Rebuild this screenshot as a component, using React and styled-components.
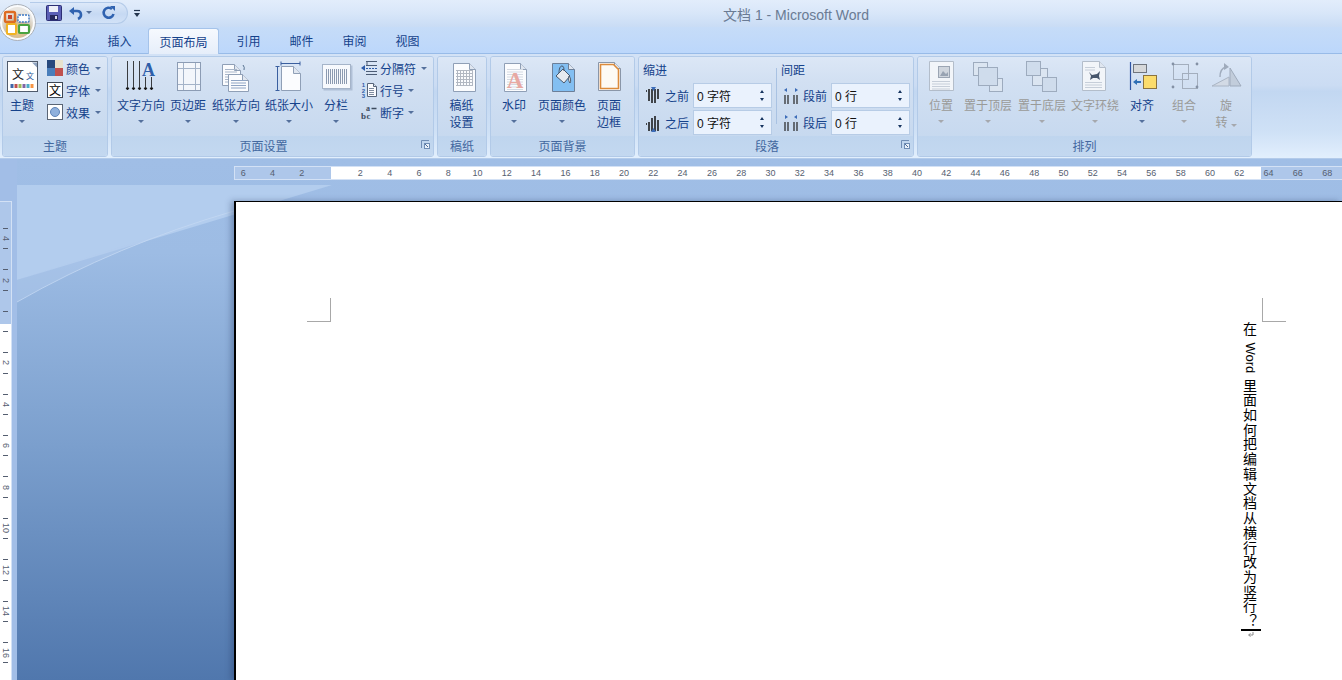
import React from 'react';
import styled, { createGlobalStyle } from 'styled-components';

const GlobalStyle = createGlobalStyle`
  html, body {
    margin: 0;
    padding: 0;
    height: 100%;
    overflow: hidden;
  }
  * {
    box-sizing: border-box;
  }
  body {
    font-family: "Liberation Sans", "Noto Sans CJK SC", sans-serif;
    font-size: 12px;
    color: #15428b;
  }
`;

const Window = styled.div`
  position: relative;
  width: 1342px;
  height: 680px;
  display: flex;
  flex-direction: column;
  overflow: hidden;
`;

const OfficeButton = styled.div`
  position: absolute;
  left: -1px;
  top: 4px;
  width: 37px;
  height: 37px;
  z-index: 3;
`;

const TitleBar = styled.div`
  height: 27px;
  display: flex;
  align-items: center;
  background: linear-gradient(#e2edfb, #d9e7f9 45%, #c9dcf5);
`;

const QuickBarArea = styled.div`
  width: 250px;
  display: flex;
  align-items: center;
  padding-left: 30px;
`;

const QuickBar = styled.div`
  width: 98px;
  height: 22px;
  margin-top: -2px;
  display: flex;
  align-items: center;
  padding-left: 16px;
  border: 1px solid #b4cbe9;
  border-left: none;
  border-radius: 0 12px 12px 0;
  background: linear-gradient(#dde9f9, #c6d9f3 55%, #d2e2f7);
`;

const QuickSlot = styled.span`
  display: flex;
  margin-left: ${(p) => p.$gap || 0}px;
`;

const Customize = styled.span`
  display: flex;
  margin-left: 6px;
`;

const Title = styled.div`
  flex: 1;
  text-align: center;
  color: #6a7b94;
  font-size: 14px;
`;

const TabRow = styled.div`
  height: 26px;
  display: flex;
  padding: 1px 0 0 40px;
  background: linear-gradient(#c6dcf8, #bcd7fb);
`;

const Tab = styled.div`
  width: ${(p) => (p.$active ? 71 : 53)}px;
  height: ${(p) => (p.$active ? 26 : 25)}px;
  margin: ${(p) => (p.$active ? '0 3px 0 2px' : '0')};
  display: flex;
  align-items: center;
  justify-content: center;
  color: #15428b;
  position: relative;
  z-index: 1;
  ${(p) =>
    p.$active &&
    `
    background: linear-gradient(#f6f9fe, #e6eefa);
    border: 1px solid #a5c3ea;
    border-bottom: none;
    border-radius: 3px 3px 0 0;
  `}
`;

const Ribbon = styled.div`
  height: 105px;
  display: flex;
  gap: 3px;
  padding: 2px 0 0 2px;
  border-top: 1px solid #98bbe8;
  background: linear-gradient(#d3e2f6, #cbdcf3 30%, #c2d7f1 36%, #cfe1f6 75%, #e2effd);
`;

const Group = styled.div`
  width: ${(p) => p.$w}px;
  height: 101px;
  display: flex;
  flex-direction: column;
  border: 1px solid #b2cae8;
  border-radius: 3px;
  overflow: hidden;
`;

const GroupBody = styled.div`
  height: 79px;
  display: flex;
  padding-left: ${(p) => p.$pad || 0}px;
  background: linear-gradient(#dce7f6, #d2e0f2 30%, #c7d9ef);
`;

const GroupFooter = styled.div`
  position: relative;
  height: 20px;
  display: flex;
  align-items: center;
  justify-content: center;
  padding: 0 ${(p) => (p.$launcher ? 18 : 0)}px 1px 0;
  color: #43689f;
  background: linear-gradient(#bfd5ee, #c3d8f0);
`;

const Launcher = styled.span`
  position: absolute;
  right: 3px;
  top: 4px;
  display: flex;
`;

const BigButton = styled.div`
  width: ${(p) => p.$w}px;
  display: flex;
  flex-direction: column;
  align-items: center;
  padding-top: 3px;
  flex: none;
`;

const IconBox = styled.div`
  width: 34px;
  height: 33px;
  margin-bottom: 5px;
`;

const Label = styled.div`
  height: 17px;
  line-height: 17px;
  white-space: nowrap;
  color: ${(p) => (p.$muted ? '#9a9a98' : '#15428b')};
`;

const CaretRow = styled.div`
  height: 17px;
  margin-top: -2px;
  display: flex;
  align-items: center;
  justify-content: center;
`;

const Caret = styled.span`
  display: inline-block;
  width: 0;
  height: 0;
  margin-left: ${(p) => p.$gap || 0}px;
  border-left: 3px solid transparent;
  border-right: 3px solid transparent;
  border-top: 3px solid ${(p) => (p.$muted ? '#a5a8ad' : '#54709c')};
`;

const SmallColumn = styled.div`
  display: flex;
  flex-direction: column;
  margin-left: ${(p) => p.$gap}px;
`;

const SmallRow = styled.div`
  height: 22px;
  display: flex;
  align-items: center;
`;

const SmallLabel = styled.span`
  margin-left: 3px;
  white-space: nowrap;
`;

const ParaColumn = styled.div`
  width: 129px;
  padding-top: 6px;
`;

const ParaHead = styled.div`
  height: 17px;
  line-height: 17px;
  margin-bottom: 3px;
`;

const ParaRow = styled.div`
  height: 25px;
  margin-bottom: 2px;
  display: flex;
  align-items: center;
  padding-left: 2px;
`;

const ParaLabel = styled.span`
  width: 24px;
  margin: 0 4px 0 4px;
  white-space: nowrap;
`;

const ParaRule = styled.div`
  width: 1px;
  height: 56px;
  margin: 11px 4px 0;
  background: #a9c2e2;
`;

const SpinBox = styled.div`
  width: 79px;
  height: 25px;
  display: flex;
  align-items: center;
  justify-content: space-between;
  padding: 0 7px 0 3px;
  background: #eaf2fd;
  border: 1px solid #b7cce6;
  color: #111;
`;

const Spinner = styled.div`
  display: flex;
  flex-direction: column;
  gap: 5px;
`;

const SpinArrow = styled.span`
  width: 0;
  height: 0;
  border-left: 2.5px solid transparent;
  border-right: 2.5px solid transparent;
  ${(p) => (p.$up ? 'border-bottom: 3px solid #16345f;' : 'border-top: 3px solid #16345f;')}
`;

const Workspace = styled.div`
  height: 522px;
  display: flex;
  border-top: 1px solid #b3cbea;
`;

const LeftColumn = styled.div`
  width: 17px;
  flex: none;
  padding-top: 42px;
  background: #a2bee7;
`;

const VRuler = styled.div`
  width: 12px;
  height: 479px;
  padding-top: 16px;
  overflow: hidden;
  border-top: 1px solid #d3e1f5;
  border-right: 1px solid #d3e1f5;
  background: linear-gradient(#aec7ea 122px, #fff 122px);
`;

const VCell = styled.div`
  height: 41.4px;
  display: grid;
  grid-template-rows: 1px 1fr 1px;
  justify-items: center;
  align-items: center;
  padding: 10px 0;
`;

const VTick = styled.span`
  width: 5px;
  height: 1px;
  background: #555e70;
`;

const VNumber = styled.span`
  writing-mode: vertical-rl;
  font-size: 9px;
  line-height: 9px;
  color: #555e70;
`;

const Main = styled.div`
  position: relative;
  flex: 1;
  min-width: 0;
  padding-top: 7px;
  background: linear-gradient(#a0bee6, #9dbce4 18%, #7b9fcd 55%, #5077ad);
`;

const Swoosh = styled.svg`
  position: absolute;
  left: 0;
  top: 0;
`;

const HRuler = styled.div`
  position: relative;
  height: 14px;
  margin-left: 217px;
  display: flex;
  overflow: hidden;
  border: 1px solid #d3e1f5;
  border-right: none;
  background: linear-gradient(to right, #aec7ea 96px, #fff 96px, #fff 1026px, #aec7ea 1026px);
`;

const HCell = styled.span`
  width: 29.3px;
  flex: none;
  text-align: center;
  font-size: 9px;
  line-height: 12px;
  color: #555e70;
  margin-left: ${(p) => (p.$first ? -6.5 : 0)}px;
`;

const Page = styled.div`
  position: relative;
  height: 479px;
  margin: 21px 0 0 217px;
  padding-top: 96px;
  background: #fff;
  border-left: 2px solid #000;
  border-top: 1px solid #000;
  box-shadow: -3px 0 6px rgba(30, 50, 90, 0.35);
`;

const MarkRow = styled.div`
  display: flex;
  justify-content: space-between;
  padding: 0 56px 0 71px;
`;

const CropMark = styled.div`
  width: 24px;
  height: 24px;
  border-bottom: 1px solid #a8a8a8;
  ${(p) => (p.$right ? 'border-left: 1px solid #a8a8a8;' : 'border-right: 1px solid #a8a8a8;')}
`;

const TextColumn = styled.div`
  width: 20px;
  margin: 0 81px 0 auto;
  display: flex;
  flex-direction: column;
  align-items: center;
`;

const VerticalText = styled.div`
  writing-mode: vertical-rl;
  height: 307px;
  margin-right: 2px;
  font-family: "Noto Sans CJK SC", sans-serif;
  font-size: 14px;
  line-height: 20px;
  letter-spacing: 0.72px;
  white-space: nowrap;
  color: #000;
`;

const LatinRun = styled.span`
  font-family: "Liberation Sans", sans-serif;
  font-size: 13px;
  letter-spacing: 0;
  padding-inline: 1.5px;
`;

const Cursor = styled.div`
  width: 20px;
  height: 2px;
  background: #000;
`;

const Doc = ({ x, y, w, h, fold = 6, fill = '#fbfcfe', stroke = '#8f9fb6', sw = 1 }) => (
  <g>
    <path
      d={`M${x} ${y}H${x + w - fold}L${x + w} ${y + fold}V${y + h}H${x}Z`}
      fill={fill}
      stroke={stroke}
      strokeWidth={sw}
    />
    <path d={`M${x + w - fold} ${y}V${y + fold}H${x + w}`} fill="#dfe6f0" stroke={stroke} strokeWidth={sw} />
  </g>
);

const Icon = ({ w = 34, h = 33, children }) => (
  <svg width={w} height={h} viewBox={`0 0 ${w} ${h}`} shapeRendering="geometricPrecision">
    {children}
  </svg>
);

const Lines = ({ x, y, w, n, step = 2, color = '#a9b6c9' }) => (
  <g stroke={color} strokeWidth="1">
    {Array.from({ length: n }).map((_, i) => (
      <path key={i} d={`M${x} ${y + i * step + 0.5}h${w}`} />
    ))}
  </g>
);

const ThemeIcon = () => (
  <Icon>
    <rect x="2.500" y="1.500" width="30" height="30" fill="#fff" stroke="#4f5a6b" />
    <path d="M27 2.500h5v5z" fill="#8fa3c0" />
    <text x="13" y="19" fontSize="12" fill="#222" textAnchor="middle" fontFamily="Noto Sans CJK SC">文</text>
    <text x="25" y="19" fontSize="8" fill="#2b5797" textAnchor="middle" fontFamily="Noto Sans CJK SC">文</text>
    {['#3f66a8', '#c0504d', '#9bbb59', '#8064a2', '#4bacc6', '#f79646'].map((c, i) => (
      <rect key={c} x={5.5 + i * 4} y="24" width="3" height="4" fill={c} />
    ))}
  </Icon>
);

const ColorsIcon = () => (
  <Icon w={16} h={16}>
    <rect x="0" y="0" width="8" height="8" fill="#27497d" />
    <rect x="8" y="0" width="8" height="8" fill="#e7e2cd" />
    <rect x="0" y="8" width="8" height="8" fill="#4a7ebb" />
    <rect x="8" y="8" width="8" height="8" fill="#c0504d" />
  </Icon>
);

const FontsIcon = () => (
  <Icon w={16} h={16}>
    <rect x="0.5" y="0.5" width="15" height="15" fill="#fff" stroke="#3d4654" />
    <text x="8" y="12.5" fontSize="12" fill="#000" textAnchor="middle" fontFamily="Noto Sans CJK SC">文</text>
  </Icon>
);

const EffectsIcon = () => (
  <Icon w={16} h={16}>
    <rect x="0.5" y="0.5" width="15" height="15" fill="#fff" stroke="#5a6575" />
    <circle cx="8" cy="8" r="4.5" fill="#8fb0dc" stroke="#5f84b8" />
  </Icon>
);

const DirectionIcon = () => (
  <Icon>
    <g stroke="#111" strokeWidth="0.8" fill="#111">
      {[3.5, 9.5, 15.5].map((x) => (
        <g key={x}>
          <path d={`M${x} 1V28`} />
          <path d={`M${x - 1.5} 28h3l-1.500 2z`} />
        </g>
      ))}
      {[21.5, 27.5].map((x) => (
        <g key={x}>
          <path d={`M${x} 17V28`} />
          <path d={`M${x - 1.5} 28h3l-1.500 2z`} />
        </g>
      ))}
    </g>
    <text x="24.5" y="15.5" fontSize="18" fontWeight="700" fill="#2e5ea9" textAnchor="middle" fontFamily="Liberation Serif">A</text>
  </Icon>
);

const MarginsIcon = () => (
  <Icon>
    <rect x="6.5" y="2.5" width="23" height="28" fill="#f3f6fb" stroke="#8c9cb4" />
    <path d="M12.5 3v27M24.5 3v27M7 8.5h22M7 24.5h22" stroke="#a4b3c8" />
  </Icon>
);

const OrientIcon = () => (
  <Icon>
    <Doc x={3.5} y={4.5} w={18} h={21} />
    <Lines x={6} y={9} w={12} n={6} step={2.5} />
    <Doc x={9.5} y={14.5} w={20} h={17} />
    <Lines x={12} y={20} w={15} n={4} step={2.5} color="#8ea4c4" />
    <path d="M24 5a5 5 0 0 1 1 5" fill="none" stroke="#56718f" />
  </Icon>
);

const SizeIcon = () => (
  <Icon>
    <Doc x={9.5} y={6.5} w={19} h={24} fold={7} />
    <path d="M9 3.5h19M9 1.5v4M28 1.5v4M5.5 6v24M3.5 6.5h4M3.5 30.5h4" stroke="#3a5f9f" fill="none" />
  </Icon>
);

const ColumnsIcon = () => (
  <Icon>
    <rect x="4.5" y="5.5" width="29" height="25" fill="#8da0bb" opacity="0.5" />
    <rect x="3.5" y="4.5" width="28" height="24" fill="#f7f9fd" stroke="#a5b4c9" />
    <g stroke="#8c9ab0">
      {Array.from({ length: 11 }).map((_, i) => (
        <path key={i} d={`M${7.5 + i * 2} 9v15`} />
      ))}
    </g>
  </Icon>
);

const BreakIcon = () => (
  <Icon w={16} h={16}>
    <path d="M0 8l4-3v6z" fill="#2f5da8" />
    <path d="M5 1.5h11M5 5.5h11M5 11.5h11M5 14.5h11M6 1.5v4" stroke="#4c5d76" fill="none" />
    <path d="M5 8.5h11" stroke="#2f5da8" strokeDasharray="2 1" />
  </Icon>
);

const LineNumIcon = () => (
  <Icon w={16} h={16}>
    <text x="2.5" y="5" fontSize="6" fontWeight="700" fill="#2f5da8" textAnchor="middle">1</text>
    <text x="2.5" y="10.5" fontSize="6" fontWeight="700" fill="#2f5da8" textAnchor="middle">2</text>
    <text x="2.5" y="16" fontSize="6" fontWeight="700" fill="#2f5da8" textAnchor="middle">3</text>
    <Doc x={6.5} y={1.5} w={9} h={13} fold={3} stroke="#55647a" />
    <Lines x={8} y={6} w={5} n={4} step={2} color="#7f8ca0" />
  </Icon>
);

const HyphenIcon = () => (
  <Icon w={16} h={16}>
    <text x="0" y="15" fontSize="9" fontWeight="700" fill="#3c4a5e" fontFamily="Liberation Serif">b</text>
    <text x="5.5" y="15" fontSize="9" fontWeight="700" fill="#3c4a5e" fontFamily="Liberation Serif">c</text>
    <text x="5" y="7" fontSize="8" fontWeight="700" fill="#3c4a5e" fontFamily="Liberation Serif">a</text>
    <path d="M10.5 4.5h5" stroke="#3c4a5e" strokeWidth="1.5" />
  </Icon>
);

const ManuscriptIcon = () => (
  <Icon>
    <Doc x={8.5} y={3.5} w={22} h={28} />
    <g stroke="#b2b8c2">
      {[10, 13, 16, 19, 22, 25].map((y) => (
        <path key={y} d={`M11 ${y + 0.5}h17`} />
      ))}
      {[12, 15, 18, 21, 24, 27].map((x) => (
        <path key={x} d={`M${x + 0.5} 10v16`} />
      ))}
    </g>
  </Icon>
);

const WatermarkIcon = () => (
  <Icon>
    <Doc x={7.5} y={3.5} w={22} h={28} />
    <Lines x={10} y={9} w={16} n={9} step={2.5} color="#d4dae3" />
    <text x="18" y="28" fontSize="23" fontWeight="700" fill="#e8a9a2" textAnchor="middle" fontFamily="Liberation Serif">A</text>
  </Icon>
);

const PageColorIcon = () => (
  <Icon>
    <Doc x={7.5} y={3.5} w={22} h={28} fill="#83bff2" stroke="#6c7f99" />
    <path d="M11 16l7-7 7 7-6 7z" fill="#e7ebf0" stroke="#49586c" />
    <path d="M14 13c0-4 1-7 3-7s2 3 2 5" fill="none" stroke="#49586c" />
    <path d="M24 16c2 2 2 6 1 7-1-1-2-4-1-7z" fill="#f7f7f2" stroke="#49586c" />
  </Icon>
);

const PageBorderIcon = () => (
  <Icon>
    <Doc x={6.5} y={2.5} w={22} h={28} stroke="#8a96a8" />
    <path d="M8.5 4.5h13l5 5v19h-18z" fill="#fdfaf5" stroke="#dc8b3c" strokeWidth="1.6" />
  </Icon>
);

const PositionIcon = () => (
  <Icon>
    <Doc x={5.5} y={1.5} w={24} h={29} fold={0} stroke="#b3bdca" fill="#f2f5f9" />
    <Lines x={8} y={21} w={18} n={4} step={2.5} color="#c6ced9" />
    <rect x="14.5" y="6.5" width="11" height="11" fill="#cfd5dd" stroke="#9ba5b3" />
    <path d="M16 16l3-5 3 3 2-2v4z" fill="#98a3b2" />
  </Icon>
);

const Sheet = ({ x, y, w, h, front }) => (
  <rect
    x={x}
    y={y}
    width={w}
    height={h}
    fill={front ? '#cfdcec' : '#dbe5f1'}
    stroke="#9dabbe"
  />
);

const ToFrontIcon = () => (
  <Icon>
    <Sheet x={18.5} y={18.5} w={13} h={13} />
    <Sheet x={2.5} y={2.5} w={14} h={13} />
    <Sheet x={7.5} y={7.5} w={19} h={18} front />
  </Icon>
);

const ToBackIcon = () => (
  <Icon>
    <Sheet x={7.5} y={8.5} w={15} h={17} />
    <Sheet x={1.5} y={1.5} w={14} h={14} front />
    <Sheet x={17.5} y={17.5} w={14} h={14} front />
  </Icon>
);

const WrapIcon = () => (
  <Icon>
    <Doc x={4.5} y={1.5} w={23} h={29} stroke="#b3bdca" fill="#f2f5f9" />
    <Lines x={7} y={7} w={10} n={2} step={2.5} color="#c6ced9" />
    <Lines x={7} y={22} w={17} n={3} step={2.5} color="#c6ced9" />
    <path d="M11 12l3 3 5-1 3-3-1 5 1 4-3-2h-4l-3 2 1-4z" fill="#47566c" />
  </Icon>
);

const AlignIcon = () => (
  <Icon>
    <path d="M5.5 2v28" stroke="#2f55a4" strokeWidth="1.2" />
    <rect x="8.5" y="4.5" width="13" height="8" fill="#d6d8da" stroke="#6f757e" />
    <rect x="18.5" y="15.5" width="13" height="13" fill="#fbdc6c" stroke="#8a7340" />
    <path d="M8 22l4-3v2h4v2h-4v2z" fill="#2f6fb5" />
  </Icon>
);

const GroupingIcon = () => (
  <Icon>
    <g fill="none" stroke="#a3aebd">
      <rect x="6.5" y="4.5" width="15" height="15" />
      <rect x="15.5" y="13.5" width="15" height="15" />
    </g>
    <g fill="#8491a5">
      <circle cx="6" cy="4" r="1.4" />
      <circle cx="30" cy="4" r="1.4" />
      <circle cx="6" cy="27" r="1.4" />
      <circle cx="30" cy="27" r="1.4" />
    </g>
  </Icon>
);

const RotateIcon = () => (
  <Icon>
    <path d="M3 26l17-9v9z" fill="#d2dae5" stroke="#aab5c4" />
    <path d="M21 26V8l11 18z" fill="#c2cddb" stroke="#9fabbc" />
    <path d="M11 17c0-6 2-9 6-10" fill="none" stroke="#9fabbc" strokeWidth="1.4" />
    <path d="M15 3l5 4-5 3z" fill="#9fabbc" />
  </Icon>
);

const IndentBars = ({ up }) => (
  <Icon w={16} h={18}>
    <path
      d={up ? 'M1 10h1M4 8v9M7 4v13M10 2v15M13 6v11' : 'M1 4h1M4 2v12M7 2v14M10 2v14M13 2v10'}
      stroke="#111"
      strokeWidth="1.5"
      fill="none"
    />
    <path d={up ? 'M6 18l2.5-4 2.5 4z' : 'M6 0l2.5 4L11 0z'} fill="#3c6cb8" />
  </Icon>
);

const SpacingBars = ({ apart }) => (
  <Icon w={16} h={18}>
    <path d="M2 8v9M5 8v9M11 8v9M14 8v9" stroke="#222" strokeWidth="1.2" />
    <path
      d={apart ? 'M1 3l3-2v4zM15 3l-3-2v4z' : 'M5 3l-3-2v4zM11 3l3-2v4z'}
      fill="#3c6cb8"
    />
  </Icon>
);

const OfficeLogo = () => (
  <svg width="37" height="37" viewBox="0 0 37 37">
    <defs>
      <radialGradient id="orb" cx="50%" cy="78%" r="62%">
        <stop offset="0%" stopColor="#efc985" />
        <stop offset="55%" stopColor="#c9b79c" />
        <stop offset="100%" stopColor="#e9e7e3" />
      </radialGradient>
    </defs>
    <circle cx="18.5" cy="18.5" r="18" fill="#fafbfc" stroke="#a9afb8" />
    <circle cx="18.5" cy="18.5" r="15.5" fill="url(#orb)" />
    <rect x="6" y="8" width="10" height="10" rx="1.5" fill="none" stroke="#de6c22" strokeWidth="2.4" />
    <rect x="9" y="11" width="4" height="4" fill="#c9432b" />
    <rect x="19" y="11" width="11" height="7" rx="1" fill="#fff" stroke="#3d78c5" strokeWidth="1.4" strokeDasharray="2 1" />
    <rect x="8" y="20" width="9" height="10" rx="1" fill="#fff" stroke="#f1b324" strokeWidth="2" />
    <rect x="20" y="21" width="10" height="8" rx="1" fill="#fff" stroke="#4aa33f" strokeWidth="2.2" />
  </svg>
);

const SaveIcon = () => (
  <Icon w={16} h={16}>
    <rect x="0.5" y="0.5" width="15" height="15" rx="1" fill="#5b5fb5" stroke="#2d2f74" />
    <rect x="3" y="1" width="9" height="6" fill="#eef0f8" />
    <rect x="4" y="10" width="8" height="5" fill="#26285c" />
    <rect x="9" y="11" width="2" height="3" fill="#d9dbe9" />
  </Icon>
);

const UndoIcon = () => (
  <Icon w={14} h={14}>
    <path d="M4 5h4c3 0 4 2 4 4s-1 3-3 4" fill="none" stroke="#2f62b0" strokeWidth="2.6" />
    <path d="M0 5l5-4v8z" fill="#2f62b0" />
  </Icon>
);

const RedoIcon = () => (
  <Icon w={14} h={14}>
    <path d="M11 3a5 5 0 1 0 1.500 5" fill="none" stroke="#2f62b0" strokeWidth="2.6" />
    <path d="M9 0l5 0v5z" fill="#2f62b0" />
  </Icon>
);

const CustomizeIcon = () => (
  <Icon w={7} h={9}>
    <path d="M0 1.500h6" stroke="#24364f" strokeWidth="1.2" />
    <path d="M0 4h6L3 8z" fill="#24364f" />
  </Icon>
);

const LauncherIcon = () => (
  <Icon w={9} h={9}>
    <path d="M0.500 8V0.500H8" fill="none" stroke="#6f8db5" />
    <rect x="3.500" y="3.500" width="5" height="5" fill="#eaf1fa" stroke="#6f8db5" />
    <path d="M4 4l3 3" stroke="#4a6a95" />
  </Icon>
);

const tabs = ['开始', '插入', '页面布局', '引用', '邮件', '审阅', '视图'];

const hCells = [6, 4, 2, null];
for (let n = 2; n <= 68; n += 2) hCells.push(n);

const vCells = [4, 2, null];
for (let n = 2; n <= 16; n += 2) vCells.push(n);

const Big = ({ w, icon, lines, caret = true, muted, inlineCaret }) => (
  <BigButton $w={w}>
    <IconBox>{icon}</IconBox>
    {lines.map((line, i) => (
      <Label key={line} $muted={muted}>
        {line}
        {inlineCaret && i === lines.length - 1 && <Caret $muted={muted} $gap={3} />}
      </Label>
    ))}
    {caret && (
      <CaretRow>
        <Caret $muted={muted} />
      </CaretRow>
    )}
  </BigButton>
);

const Small = ({ icon, label, gap }) => (
  <SmallRow>
    {icon}
    <SmallLabel>{label}</SmallLabel>
    <Caret $gap={gap} />
  </SmallRow>
);

const Spin = ({ value }) => (
  <SpinBox>
    <span>{value}</span>
    <Spinner>
      <SpinArrow $up />
      <SpinArrow />
    </Spinner>
  </SpinBox>
);

const App = () => {
  return (
    <Window>
      <GlobalStyle />
      <OfficeButton>
        <OfficeLogo />
      </OfficeButton>

      <TitleBar>
        <QuickBarArea>
          <QuickBar>
            <QuickSlot><SaveIcon /></QuickSlot>
            <QuickSlot $gap={7}><UndoIcon /></QuickSlot>
            <QuickSlot $gap={3}><Caret /></QuickSlot>
            <QuickSlot $gap={9}><RedoIcon /></QuickSlot>
          </QuickBar>
          <Customize><CustomizeIcon /></Customize>
        </QuickBarArea>
        <Title>文档 1 - Microsoft Word</Title>
      </TitleBar>

      <TabRow>
        {tabs.map((t) => (
          <Tab key={t} $active={t === '页面布局'}>{t}</Tab>
        ))}
      </TabRow>

      <Ribbon>
        <Group $w={106}>
          <GroupBody $pad={1}>
            <Big w={36} icon={<ThemeIcon />} lines={['主题']} />
            <SmallColumn $gap={7}>
              <Small icon={<ColorsIcon />} label="颜色" gap={5} />
              <Small icon={<FontsIcon />} label="字体" gap={5} />
              <Small icon={<EffectsIcon />} label="效果" gap={5} />
            </SmallColumn>
          </GroupBody>
          <GroupFooter>主题</GroupFooter>
        </Group>

        <Group $w={323}>
          <GroupBody $pad={3}>
            <Big w={52} icon={<DirectionIcon />} lines={['文字方向']} />
            <Big w={42} icon={<MarginsIcon />} lines={['页边距']} />
            <Big w={54} icon={<OrientIcon />} lines={['纸张方向']} />
            <Big w={52} icon={<SizeIcon />} lines={['纸张大小']} />
            <Big w={42} icon={<ColumnsIcon />} lines={['分栏']} />
            <SmallColumn $gap={4}>
              <Small icon={<BreakIcon />} label="分隔符" gap={5} />
              <Small icon={<LineNumIcon />} label="行号" gap={4} />
              <Small icon={<HyphenIcon />} label="断字" gap={4} />
            </SmallColumn>
          </GroupBody>
          <GroupFooter $launcher>
            页面设置
            <Launcher><LauncherIcon /></Launcher>
          </GroupFooter>
        </Group>

        <Group $w={50}>
          <GroupBody>
            <Big w={47} icon={<ManuscriptIcon />} lines={['稿纸', '设置']} caret={false} />
          </GroupBody>
          <GroupFooter>稿纸</GroupFooter>
        </Group>

        <Group $w={145}>
          <GroupBody $pad={1}>
            <Big w={44} icon={<WatermarkIcon />} lines={['水印']} />
            <Big w={52} icon={<PageColorIcon />} lines={['页面颜色']} />
            <Big w={42} icon={<PageBorderIcon />} lines={['页面', '边框']} caret={false} />
          </GroupBody>
          <GroupFooter>页面背景</GroupFooter>
        </Group>

        <Group $w={276}>
          <GroupBody $pad={4}>
            <ParaColumn>
              <ParaHead>缩进</ParaHead>
              <ParaRow>
                <IndentBars />
                <ParaLabel>之前</ParaLabel>
                <Spin value="0 字符" />
              </ParaRow>
              <ParaRow>
                <IndentBars up />
                <ParaLabel>之后</ParaLabel>
                <Spin value="0 字符" />
              </ParaRow>
            </ParaColumn>
            <ParaRule />
            <ParaColumn>
              <ParaHead>间距</ParaHead>
              <ParaRow>
                <SpacingBars apart />
                <ParaLabel>段前</ParaLabel>
                <Spin value="0 行" />
              </ParaRow>
              <ParaRow>
                <SpacingBars />
                <ParaLabel>段后</ParaLabel>
                <Spin value="0 行" />
              </ParaRow>
            </ParaColumn>
          </GroupBody>
          <GroupFooter $launcher>
            段落
            <Launcher><LauncherIcon /></Launcher>
          </GroupFooter>
        </Group>

        <Group $w={335}>
          <GroupBody $pad={1}>
            <Big w={44} icon={<PositionIcon />} lines={['位置']} muted />
            <Big w={50} icon={<ToFrontIcon />} lines={['置于顶层']} muted />
            <Big w={58} icon={<ToBackIcon />} lines={['置于底层']} muted />
            <Big w={48} icon={<WrapIcon />} lines={['文字环绕']} muted />
            <Big w={46} icon={<AlignIcon />} lines={['对齐']} />
            <Big w={38} icon={<GroupingIcon />} lines={['组合']} muted />
            <Big w={46} icon={<RotateIcon />} lines={['旋', '转']} caret={false} inlineCaret muted />
          </GroupBody>
          <GroupFooter>排列</GroupFooter>
        </Group>
      </Ribbon>

      <Workspace>
        <LeftColumn>
          <VRuler>
            {vCells.map((n, i) => (
              <VCell key={i}>
                <VTick />
                <VNumber>{n}</VNumber>
                <VTick />
              </VCell>
            ))}
          </VRuler>
        </LeftColumn>

        <Main>
          <Swoosh width="320" height="160" viewBox="0 0 320 160">
            <path d="M0 26H315Q150 76 0 121Z" fill="#b3cdee" />
            <path d="M0 121Q110 86 217 52Q100 86 0 143Z" fill="#b3cdee" opacity="0.45" />
            <path d="M0 143Q100 86 217 52" fill="none" stroke="#c4d8f2" opacity="0.8" />
          </Swoosh>
          <HRuler>
            {hCells.map((n, i) => (
              <HCell key={i} $first={i === 0}>{n}</HCell>
            ))}
          </HRuler>
          <Page>
            <MarkRow>
              <CropMark />
              <CropMark $right />
            </MarkRow>
            <TextColumn>
              <VerticalText>
                在 <LatinRun>Word</LatinRun> 里面如何把编辑文档从横行改为竖行？
              </VerticalText>
              <Cursor />
              <svg width="8" height="7" viewBox="0 0 8 7">
                <path d="M6 1v3H2M3.500 2.500L1.500 4 3.500 5.500" fill="none" stroke="#8b8b8b" />
              </svg>
            </TextColumn>
          </Page>
        </Main>
      </Workspace>
    </Window>
  );
};

export default App;
